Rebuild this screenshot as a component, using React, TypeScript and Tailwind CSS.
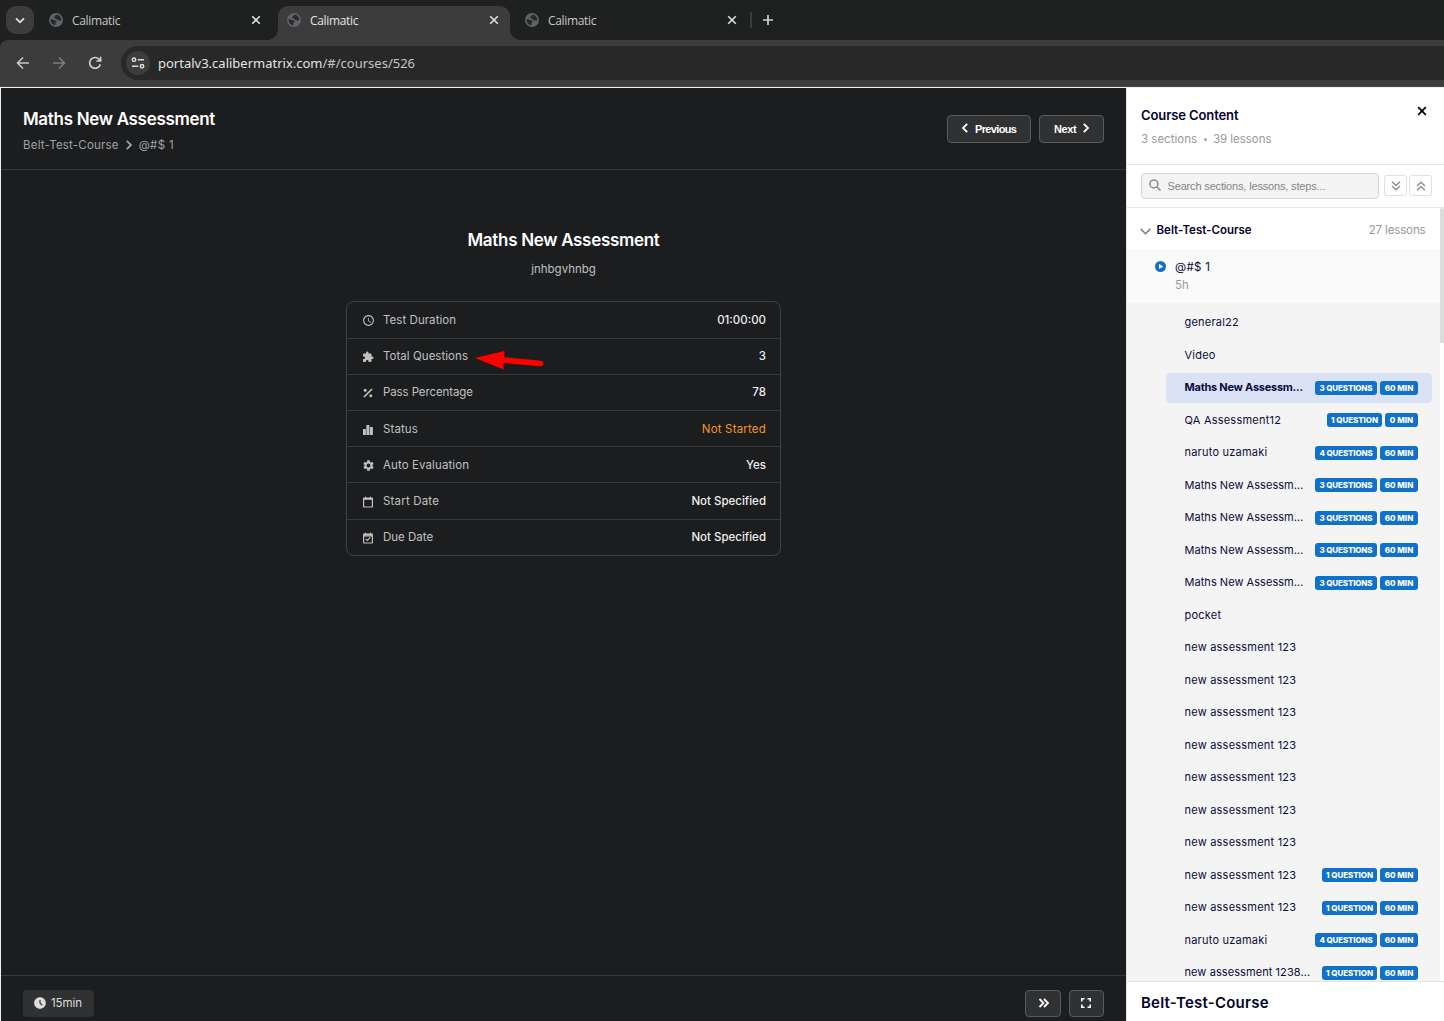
import type { ReactNode } from "react";
import {
  MdAccessTime,
  MdAccessTimeFilled,
  MdExtension,
  MdSettings,
} from "react-icons/md";

function GlobeIcon() {
  return (
    <svg width="14" height="14" viewBox="0 0 14 14" className="shrink-0">
      <circle cx="7" cy="7" r="7" fill="#5f6368" />
      <path
        d="M1.600 6.400c1.200-.2 2.600 0 3.300.6.800.7 2.200.1 2.600 1 .3.800-.6 1-.9 1.700-.3.800-.1 1.900-.9 2.500C3.300 11.600 1.400 9.200 1.600 6.400ZM8 1.700c-1.400.2-1.700 1-2 1.600-.3.700-1.300.8-.9 1.600.3.600 1.200.2 1.900.5.800.3.600 1.300 1.500 1.500.9.200 1.300.8 2.200.7.700 0 1.200-.5 1.700-.3C12.300 4.300 10.500 2 8 1.700Z"
        fill="#1f2020"
        fillOpacity=".85"
      />
    </svg>
  );
}

function CloseIcon({ size = 10, width = 1.6 }: { size?: number; width?: number }) {
  return (
    <svg width={size} height={size} viewBox="0 0 10 10" fill="none" stroke="currentColor" strokeWidth={width} className="shrink-0">
      <path d="m1.200 1.200 7.600 7.600M8.800 1.200 1.200 8.800" />
    </svg>
  );
}

function Chevron({ left, className = "" }: { left?: boolean; className?: string }) {
  return (
    <svg width="8" height="10" viewBox="0 0 8 10" fill="none" stroke="currentColor" strokeWidth="1.800" className={`shrink-0 ${className}`}>
      <path d={left ? "M6.200.800 2 5l4.200 4.200" : "M1.800.800 6 5 1.800 9.200"} />
    </svg>
  );
}

function Tab({ active }: { active?: boolean }) {
  return (
    <div
      className={
        active
          ? "relative flex h-[34px] w-[232px] items-center rounded-t-[10px] bg-[#3c3c3c] pr-[11px] pb-[6px] pl-[9px]"
          : "flex h-[34px] w-[232px] items-center pr-[11px] pb-[6px] pl-[9px]"
      }
    >
      {active && (
        <>
          <span className="absolute bottom-0 -left-[10px] size-[10px] bg-[radial-gradient(circle_at_0_0,#1f2020_9.5px,#3c3c3c_10px)]" />
          <span className="absolute -right-[10px] bottom-0 size-[10px] bg-[radial-gradient(circle_at_100%_0,#1f2020_9.5px,#3c3c3c_10px)]" />
        </>
      )}
      <GlobeIcon />
      <span className={`mt-px ml-[9px] flex-1 font-['Open_Sans',sans-serif] text-[12px] tracking-[-0.33px] ${active ? "text-[#e3e3e3]" : "text-[#c7c7c7]"}`}>
        Calimatic
      </span>
      <span className="text-[#dedede]">
        <CloseIcon />
      </span>
    </div>
  );
}

function Browser() {
  return (
    <div className="h-[87px] shrink-0 bg-[#1f2020]">
      <div className="flex h-10 pt-[6px] pl-[6px]">
        <div className="mr-[6px] flex size-7 items-center justify-center rounded-[10px] bg-[#3c3c3c]">
          <svg width="10" height="7" viewBox="0 0 10 7" fill="none" stroke="#e3e3e3" strokeWidth="1.800">
            <path d="m1 1.300 4 4 4-4" />
          </svg>
        </div>
        <div className="flex gap-[6px]">
          <Tab />
          <Tab active />
          <Tab />
        </div>
        <span className="mt-[6px] ml-[2px] h-4 w-[2px] bg-[#3c3c3c]" />
        <svg width="12" height="12" viewBox="0 0 12 12" stroke="#d0d0d0" strokeWidth="1.700" className="mt-2 ml-[10px]">
          <path d="M6 1v10M1 6h10" />
        </svg>
      </div>
      <div className="flex h-[47px] items-center rounded-tl-[8px] border-b border-[#464846] bg-[#3c3c3c] pl-[16px]">
        <svg width="14" height="14" viewBox="0 0 14 14" fill="none" stroke="#c9c9c9" strokeWidth="1.600">
          <path d="M13 7H2M7 1.500 1.500 7 7 12.500" />
        </svg>
        <svg width="14" height="14" viewBox="0 0 14 14" fill="none" stroke="#7d7d7d" strokeWidth="1.600" className="ml-[22px]">
          <path d="M1 7h11M7 1.500 12.500 7 7 12.500" />
        </svg>
        <svg width="14" height="14" viewBox="0 0 14 14" fill="none" stroke="#d3d3d3" strokeWidth="1.600" className="ml-[22px]">
          <path d="M12.300 8.200A5.400 5.400 0 1 1 11 3.200l1.300 1.500M12.600.8v4.200H8.400" />
        </svg>
        <div className="ml-[19px] flex h-[34px] flex-1 items-center rounded-l-full bg-[#282828] pl-[5px]">
          <div className="flex size-6 items-center justify-center rounded-full bg-[#3c3c3c]">
            <svg width="14" height="12" viewBox="0 0 14 12" fill="none" stroke="#dcdcdc" strokeWidth="1.500">
              <circle cx="3" cy="2.700" r="1.700" />
              <path d="M6.800 2.700H13M1 9.300h6.200" />
              <circle cx="11" cy="9.300" r="1.700" />
            </svg>
          </div>
          <span className="mt-[2px] ml-[8px] font-['Noto_Sans',sans-serif] text-[13px] text-[#e3e3e3]">
            portalv3.calibermatrix.com<span className="text-[#c4c4c4]">/#/courses/526</span>
          </span>
        </div>
      </div>
    </div>
  );
}

const PercentIcon = (
  <svg width="12" height="12" viewBox="0 0 12 12" fill="currentColor">
    <path d="M9.400 1.400 10.600 2.600 2.600 10.600 1.400 9.400Z" />
    <circle cx="3.200" cy="3.200" r="1.500" />
    <circle cx="8.800" cy="8.800" r="1.500" />
  </svg>
);

const BarsIcon = (
  <svg width="12" height="12" viewBox="0 0 12 12" fill="currentColor">
    <rect x="1" y="5" width="2.900" height="6" rx=".5" />
    <rect x="4.400" y="1" width="3" height="10" rx=".5" />
    <rect x="7.900" y="3" width="3" height="8" rx=".5" />
  </svg>
);

function CalendarIcon({ checked }: { checked?: boolean }) {
  return (
    <svg width="12" height="12" viewBox="0 0 12 12" fill="none" stroke="currentColor">
      <rect x="1.600" y="2.200" width="8.800" height="8.800" rx=".6" strokeWidth="1.200" />
      <path d="M1.500 2.900h9" strokeWidth="1.800" />
      <path d="M3.500.800v1.500M8.500.800v1.500" strokeWidth="1.300" />
      {checked && <path d="m3.700 6.800 1.600 1.600 3-3" strokeWidth="1.200" />}
      {checked && <path d="M1.500 4.200h9" strokeWidth=".8" />}
    </svg>
  );
}

type Info = { icon: ReactNode; label: string; value: string; labelClass: string; valueClass: string };

const info: Info[] = [
  { icon: <MdAccessTime size={13} />, label: "Test Duration", value: "01:00:00", labelClass: "tracking-[0.05px]", valueClass: "text-[#eeeeee] font-medium" },
  { icon: <MdExtension size={12} />, label: "Total Questions", value: "3", labelClass: "tracking-[0.04px]", valueClass: "text-[#eeeeee] font-medium" },
  { icon: PercentIcon, label: "Pass Percentage", value: "78", labelClass: "tracking-[-0.1px]", valueClass: "text-[#eeeeee] font-medium" },
  { icon: BarsIcon, label: "Status", value: "Not Started", labelClass: "tracking-[0.1px]", valueClass: "text-[#f7931e] tracking-[0.19px]" },
  { icon: <MdSettings size={13} />, label: "Auto Evaluation", value: "Yes", labelClass: "tracking-[0.1px]", valueClass: "text-[#eeeeee] font-medium" },
  { icon: <CalendarIcon />, label: "Start Date", value: "Not Specified", labelClass: "tracking-[0.18px]", valueClass: "text-[#eeeeee] font-medium" },
  { icon: <CalendarIcon checked />, label: "Due Date", value: "Not Specified", labelClass: "", valueClass: "text-[#eeeeee] font-medium" },
];

function Player() {
  return (
    <main className="flex w-[1125px] shrink-0 flex-col bg-[#1c1d1f]">
      <header className="flex h-[82px] shrink-0 items-start justify-between border-b border-[#37383a] pr-[22px] pl-[22px]">
        <div className="pt-[19px]">
          <h1 className="text-[17px] leading-6 font-semibold tracking-[-0.31px] text-white">Maths New Assessment</h1>
          <div className="mt-[4.5px] flex items-center text-[11.5px] leading-[18px] text-[#a0a1a3]">
            <span className="tracking-[0.2px]">Belt-Test-Course</span>
            <Chevron className="mr-[6px] ml-[6px]" />
            <span className="tracking-[0.3px]">@#$ 1</span>
          </div>
        </div>
        <div className="flex gap-2 pt-[27px] font-['Liberation_Sans',Arial,sans-serif] text-[11px] font-bold tracking-[-0.64px] text-white">
          <button className="flex h-7 w-[84px] items-center rounded-[4px] border border-[#58595b] bg-[#303133] pl-[13px]">
            <Chevron left className="mr-[6px] mb-[2px]" />
            Previous
          </button>
          <button className="flex h-7 w-[65px] items-center rounded-[4px] border border-[#58595b] bg-[#303133] pl-[14px]">
            <span className="tracking-[-0.4px]">Next</span>
            <Chevron className="mb-[2px] ml-[6px]" />
          </button>
        </div>
      </header>

      <section className="flex flex-1 flex-col items-center pt-[58px]">
        <h2 className="text-[17px] leading-6 font-semibold tracking-[-0.31px] text-white">Maths New Assessment</h2>
        <p className="mt-[8px] text-[11.5px] leading-[18px] text-[#c0c0c0]">jnhbgvhnbg</p>
        <div className="relative mt-[23px] h-[255px] w-[435px] rounded-[8px] border border-[#3e4042] text-[11.5px]">
          <div className="grid h-full grid-rows-[36.7px_repeat(5,36.2px)_1fr]">
            {info.map((row) => (
              <div key={row.label} className="flex items-center border-b border-[#37383a] pr-[14px] pl-[15px] last:border-b-0">
                <span className="mt-[2px] flex w-[21px] text-[#c0c0c0]">{row.icon}</span>
                <span className={`mt-px flex-1 text-[#c0c0c0] ${row.labelClass}`}>{row.label}</span>
                <span className={`mt-px ${row.valueClass}`}>{row.value}</span>
              </div>
            ))}
          </div>
          <svg width="72" height="22" viewBox="0 0 72 22" className="absolute top-[48px] left-[127px]">
            <path d="M1 8 30.500 1v6.200l36.500 3.600a2.700 2.700 0 0 1-.5 5.400L29.500 13v6.500Z" fill="#ff0000" />
          </svg>
        </div>
      </section>

      <footer className="flex h-[46px] shrink-0 items-start justify-between border-t border-[#37383a] px-[22px] pt-[14px]">
        <div className="flex h-[27px] w-[71px] items-center rounded-[4px] bg-[#303133] pl-[10px] text-[11.5px] tracking-[-0.1px] text-[#dddddd]">
          <MdAccessTimeFilled size={14} className="mr-[4px] mb-px" />
          <span className="mt-px">15min</span>
        </div>
        <div className="flex gap-2 text-white">
          <button className="flex h-[27px] w-9 items-center justify-center rounded-[4px] border border-[#58595b] bg-[#303133] pb-px pl-px">
            <svg width="12" height="10" viewBox="0 0 12 10" fill="none" stroke="currentColor" strokeWidth="1.800">
              <path d="m1.500 1 4 4-4 4M6 1l4 4-4 4" />
            </svg>
          </button>
          <button className="flex h-[27px] w-[35px] items-center justify-center rounded-[4px] border border-[#58595b] bg-[#303133] pr-px pb-px">
            <svg width="12" height="12" viewBox="0 0 12 12" fill="none" stroke="currentColor" strokeWidth="1.600">
              <path d="M1.800 4.500V1.800h2.700M7.500 1.800h2.700v2.700M10.200 7.500v2.700H7.500M4.500 10.200H1.800V7.500" />
            </svg>
          </button>
        </div>
      </footer>
    </main>
  );
}

type Step = { name: string; questions?: number; minutes?: number; active?: boolean };

const steps: Step[] = [
  { name: "general22" },
  { name: "Video" },
  { name: "Maths New Assessm...", questions: 3, minutes: 60, active: true },
  { name: "QA Assessment12", questions: 1, minutes: 0 },
  { name: "naruto uzamaki", questions: 4, minutes: 60 },
  { name: "Maths New Assessm...", questions: 3, minutes: 60 },
  { name: "Maths New Assessm...", questions: 3, minutes: 60 },
  { name: "Maths New Assessm...", questions: 3, minutes: 60 },
  { name: "Maths New Assessm...", questions: 3, minutes: 60 },
  { name: "pocket" },
  { name: "new assessment 123" },
  { name: "new assessment 123" },
  { name: "new assessment 123" },
  { name: "new assessment 123" },
  { name: "new assessment 123" },
  { name: "new assessment 123" },
  { name: "new assessment 123" },
  { name: "new assessment 123", questions: 1, minutes: 60 },
  { name: "new assessment 123", questions: 1, minutes: 60 },
  { name: "naruto uzamaki", questions: 4, minutes: 60 },
  { name: "new assessment 1238...", questions: 1, minutes: 60 },
];

function stepTracking(step: Step) {
  if (step.active) return "font-bold tracking-[-0.25px]";
  if (step.name.startsWith("Maths")) return "tracking-[0.04px]";
  if (step.name.endsWith("...")) return "tracking-[0.08px]";
  return "tracking-[0.22px]";
}

function StepRow({ step }: { step: Step }) {
  return (
    <div
      className={`flex h-[30px] shrink-0 items-center justify-between rounded-[4px] pr-[14px] pl-[18.5px] ${step.active ? "bg-[#dae2f5]" : ""}`}
    >
      <span className={`mb-[1.5px] text-[11px] whitespace-nowrap text-[#0b0b3b] ${stepTracking(step)}`}>{step.name}</span>
      {step.questions !== undefined && (
        <span className="mb-px flex gap-[3px] text-[8px] leading-[14px] font-extrabold text-white">
          <span className={`h-[14px] rounded-[3px] bg-[#1170c8] text-center ${step.questions === 1 ? "w-[55px] tracking-[-0.06px]" : "w-[62px] tracking-[-0.15px]"}`}>
            {step.questions} {step.questions === 1 ? "QUESTION" : "QUESTIONS"}
          </span>
          <span className={`h-[14px] rounded-[3px] bg-[#1170c8] text-center ${step.minutes === 0 ? "w-[33px]" : "w-[38px]"}`}>{step.minutes} MIN</span>
        </span>
      )}
    </div>
  );
}

function Sidebar() {
  return (
    <aside className="flex flex-1 flex-col overflow-hidden border-l border-[#e3e4e6] bg-white">
      <div className="flex h-[77px] shrink-0 justify-between border-b border-[#e6e6e6] pr-[17px] pl-[14px]">
        <div className="pt-[17px]">
          <h2 className="text-[13px] leading-5 font-semibold tracking-[-0.1px] text-[#03032d]">Course Content</h2>
          <p className="mt-[5px] flex text-[11.5px] leading-[18px] text-[#98999b]">
            3 sections
            <span className="flex w-4 items-center justify-center">
              <span className="size-[3px] rounded-full bg-[#a5a6a8]" />
            </span>
            <span className="tracking-[-0.04px]">39 lessons</span>
          </p>
        </div>
        <span className="pt-[18px] text-black">
          <CloseIcon width={1.8} />
        </span>
      </div>

      <div className="flex h-[43px] shrink-0 items-center border-b border-[#e6e6e6] pl-[14px]">
        <div className="flex h-[26px] w-[238px] items-center rounded-[4px] border border-[#d6d6d6] bg-[#f4f4f4] pl-[7px]">
          <svg width="12" height="12" viewBox="0 0 12 12" fill="none" stroke="#8a8a8a" strokeWidth="1.500" className="mb-[2px]">
            <circle cx="4.900" cy="4.900" r="4" />
            <path d="m7.800 7.800 3.700 3.700" />
          </svg>
          <span className="ml-[6.5px] font-['Liberation_Sans',Arial,sans-serif] text-[11px] tracking-[-0.16px] text-[#858585]">
            Search sections, lessons, steps...
          </span>
        </div>
        <div className="mb-px ml-[5px] flex gap-[2px] text-[#8d8e90]">
          <span className="flex h-[21px] w-[23px] items-center justify-center rounded-[3px] border border-[#e0e0e0]">
            <svg width="10" height="10" viewBox="0 0 10 10" fill="none" stroke="currentColor" strokeWidth="1.500">
              <path d="m1 .800 4 3.700L9 .800M1 5l4 3.700L9 5" />
            </svg>
          </span>
          <span className="flex h-[21px] w-[23px] items-center justify-center rounded-[3px] border border-[#e0e0e0]">
            <svg width="10" height="10" viewBox="0 0 10 10" fill="none" stroke="currentColor" strokeWidth="1.500">
              <path d="m1 5 4-3.700L9 5M1 9.200l4-3.700 4 3.700" />
            </svg>
          </span>
        </div>
      </div>

      <div className="flex min-h-0 flex-1">
        <div className="flex min-w-0 flex-1 flex-col overflow-hidden">
          <div className="flex h-[41px] shrink-0 items-center pt-[9px] pr-[14.5px] pb-[4px] pl-[13px] text-[11.5px]">
            <svg width="11" height="7" viewBox="0 0 11 7" fill="none" stroke="#7d7e82" strokeWidth="1.500" className="mt-[1px]">
              <path d="m.700.900 4.800 4.800L10.300.900" />
            </svg>
            <span className="ml-[5.5px] flex-1 font-semibold text-[#03032d]">Belt-Test-Course</span>
            <span className="tracking-[-0.13px] text-[#98999b]">27 lessons</span>
          </div>
          <div className="flex h-[54px] shrink-0 bg-[#fafafa] pl-[28px] text-[11.5px] leading-[18px]">
            <svg width="11" height="11" viewBox="0 0 11 11" className="mt-[12px]">
              <circle cx="5.500" cy="5.500" r="5.500" fill="#1170c8" />
              <path d="M4 3v5l4.200-2.500Z" fill="#fff" />
            </svg>
            <div className="ml-[9px] pt-[8.500px]">
              <div className="tracking-[0.33px] text-[#0b0b3b]">@#$ 1</div>
              <div className="text-[#98999b]">5h</div>
            </div>
          </div>
          <div className="flex flex-1 flex-col gap-[2.5px] bg-[#f4f4f4] pt-[5px] pr-2 pl-[39px]">
            {steps.map((step, i) => (
              <StepRow key={i} step={step} />
            ))}
          </div>
        </div>
        <div className="w-1 shrink-0">
          <div className="h-[135px] rounded-t-[2px] bg-[#dcdcdc]" />
        </div>
      </div>

      <div className="flex h-10 shrink-0 items-center border-t border-[#e3e3e3] pl-[14px]">
        <span className="mt-[3px] text-[15px] font-semibold tracking-[0.23px] text-[#03032d]">Belt-Test-Course</span>
      </div>
    </aside>
  );
}

export default function App() {
  return (
    <div className="flex h-[1021px] w-[1444px] flex-col overflow-hidden font-['Inter',sans-serif]">
      <Browser />
      <div className="flex min-h-0 flex-1 border-t border-l border-[#eceef2] bg-white">
        <Player />
        <Sidebar />
      </div>
    </div>
  );
}
